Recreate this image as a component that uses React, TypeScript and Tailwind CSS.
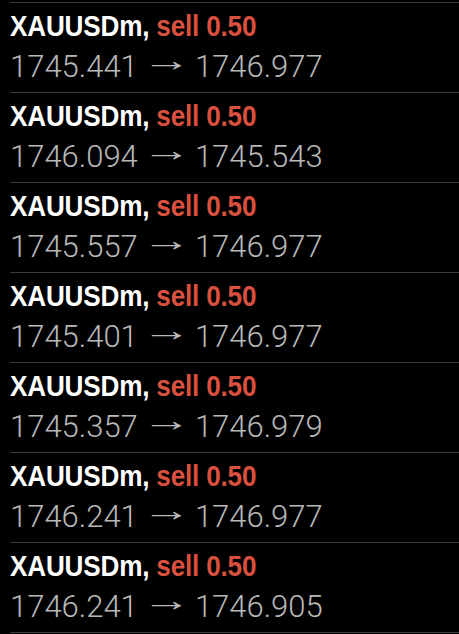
const rows: [string, string][] = [
  ["1745.441", "1746.977"],
  ["1746.094", "1745.543"],
  ["1745.557", "1746.977"],
  ["1745.401", "1746.977"],
  ["1745.357", "1746.979"],
  ["1746.241", "1746.977"],
  ["1746.241", "1746.905"],
];

function TradeRow({ from, to }: { from: string; to: string }) {
  return (
    <div className="h-[90px] border-t border-[#3a3a3a] pt-[6px]">
      <div className="origin-left scale-x-[0.9] whitespace-nowrap font-['Liberation_Sans',Arial,sans-serif] text-[29px] font-bold leading-[34px] tracking-[-0.2px] text-white">
        XAUUSDm, <span className="text-[#d9503f]">sell 0.50</span>
      </div>
      <div className="mt-[6px] whitespace-nowrap font-['Roboto','Helvetica_Neue',sans-serif] text-[31px] font-light leading-[36px] text-[#b8b8b8]">
        {from}{" "}
        <span className="mx-[6px] inline-block w-[30px] -translate-y-[6px] scale-x-[1.6] text-center">→</span>{" "}
        {to}
      </div>
    </div>
  );
}

export default function App() {
  return (
    <div className="min-h-screen bg-black pt-[2px]">
      <div className="ml-[10px] border-b border-[#3a3a3a]">
        {rows.map(([from, to], i) => (
          <TradeRow key={i} from={from} to={to} />
        ))}
      </div>
    </div>
  );
}
